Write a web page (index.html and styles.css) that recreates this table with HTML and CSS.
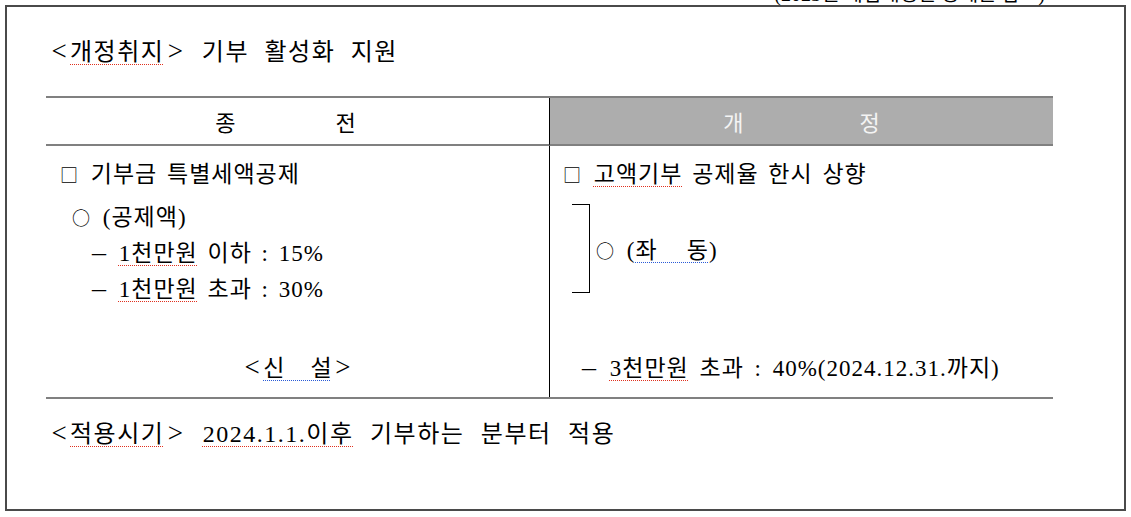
FILE: index.html
```html
<!DOCTYPE html>
<html lang="ko">
<head>
<meta charset="utf-8">
<title>기부 활성화 지원</title>
<link rel="stylesheet" href="styles.css">
</head>
<body>
<div class="topnote"><p>(2023년 세법개정안 상세본 참고)</p></div>
<div class="doc">
  <p class="title"><span class="wb">&lt;</span><span class="sp">개정취지</span><span class="wb">&gt;</span> 기부 활성화 지원</p>
  <div class="cmp">
    <div class="hd hd-old"><span>종</span><span>전</span></div>
    <div class="hd hd-new"><span>개</span><span>정</span></div>
    <div class="cell cell-old">
      <p class="ln l-box"><span class="sym">□</span> 기부금 특별세액공제</p>
      <p class="ln l-circ"><span class="sym">○</span> (공제액)</p>
      <p class="ln l-dash l-dash1"><span class="dash">–</span> <span class="sp">1천만원</span> 이하 : 15%</p>
      <p class="ln l-dash"><span class="dash">–</span> <span class="sp">1천만원</span> 초과 : 30%</p>
      <p class="ln l-new"><span class="wb">&lt;</span><span class="sp-blue">신&nbsp;&nbsp;&nbsp;설</span><span class="wb">&gt;</span></p>
    </div>
    <div class="cell cell-new">
      <p class="ln l-box"><span class="sym">□</span> <span class="sp">고액기부</span> 공제율 한시 상향</p>
      <div class="same">
        <span class="bracket"></span>
        <p class="ln"><span class="sym">○</span> (<span class="sp-blue">좌&nbsp;&nbsp;&nbsp;동</span>)</p>
      </div>
      <p class="ln l-last"><span class="dash">–</span> <span class="sp">3천만원</span> 초과 : 40%(2024.12.31.까지)</p>
    </div>
  </div>
  <p class="apply"><span class="wb">&lt;</span><span class="sp">적용시기</span><span class="wb">&gt;</span> <span class="sp">2024.1.1.이후</span> 기부하는 분부터 적용</p>
</div>
</body>
</html>
```
FILE: styles.css
```css
html, body {
  margin: 0;
  background: #fff;
}
body {
  font-family: "Liberation Serif", "Noto Sans CJK KR", serif;
  color: #000;
  overflow: hidden;
}
p { margin: 0; }

.topnote {
  display: flow-root;
  height: 5px;
}
.topnote p {
  margin-top: -17px;
  font-size: 20px;
  line-height: 22px;
  text-align: right;
  padding-right: 86px;
}

.doc {
  box-sizing: border-box;
  width: 1121px;
  height: 506px;
  margin-left: 5px;
  border: 2px solid #4a4a4a;
  padding: 30px 0 0 41px;
}

.title,
.apply {
  font-size: 24px;
  line-height: 30px;
  letter-spacing: 1.5px;
  word-spacing: 8px;
}
.apply {
  margin-top: 20px;
  word-spacing: 9px;
}

.wb {
  display: inline-block;
  width: 22px;
  text-align: center;
  font-size: 27px;
  line-height: 1;
  letter-spacing: 0;
}
.sp {
  text-decoration: underline dotted #e0301e;
  text-underline-offset: 4px;
  text-decoration-thickness: 1px;
}
.sp-blue {
  text-decoration: underline dotted #2a5bd7;
  text-underline-offset: 4px;
  text-decoration-thickness: 1px;
}

.cmp {
  display: grid;
  grid-template-columns: 503px 504px;
  width: 1007px;
  margin: 29px 0 0 -2px;
  border-top: 2px solid #808080;
  border-bottom: 2px solid #808080;
}
.hd {
  height: 46px;
  border-bottom: 2px solid #808080;
  display: flex;
  justify-content: center;
  align-items: center;
  font-size: 22px;
}
.hd-old {
  gap: 100px;
  padding-right: 24px;
}
.hd-new {
  gap: 116px;
  background: #adadad;
  color: #f4f4f4;
  border-left: 1px solid #000;
}

.cell {
  height: 251px;
  display: flex;
  flex-direction: column;
  font-size: 23px;
  letter-spacing: 1px;
  box-sizing: border-box;
  padding: 13px 0 13px 14px;
}
.cell-new {
  border-left: 1px solid #000;
  padding-left: 13px;
}
.ln {
  line-height: 30px;
  word-spacing: 3px;
  white-space: nowrap;
}
.sym {
  font-family: "Noto Sans CJK KR", sans-serif;
  font-size: 18px;
  letter-spacing: 3px;
}
.dash {
  display: inline-block;
  width: 17px;
  font-size: 28px;
  line-height: 1;
}
.l-circ {
  margin: 12px 0 0 12px;
}
.l-dash {
  margin: 5px 0 0 32px;
}
.l-new {
  margin-top: auto;
  align-self: center;
  margin-left: -14px;
  letter-spacing: 0;
}

.same {
  display: flex;
  align-items: center;
  margin: 18px 0 0 9px;
}
.bracket {
  box-sizing: border-box;
  width: 18px;
  height: 89px;
  border: 1.5px solid #000;
  border-left: none;
  margin-right: 6px;
  margin-top: -4px;
}
.l-last {
  margin-top: auto;
  margin-left: 19px;
  word-spacing: 4px;
}
```
